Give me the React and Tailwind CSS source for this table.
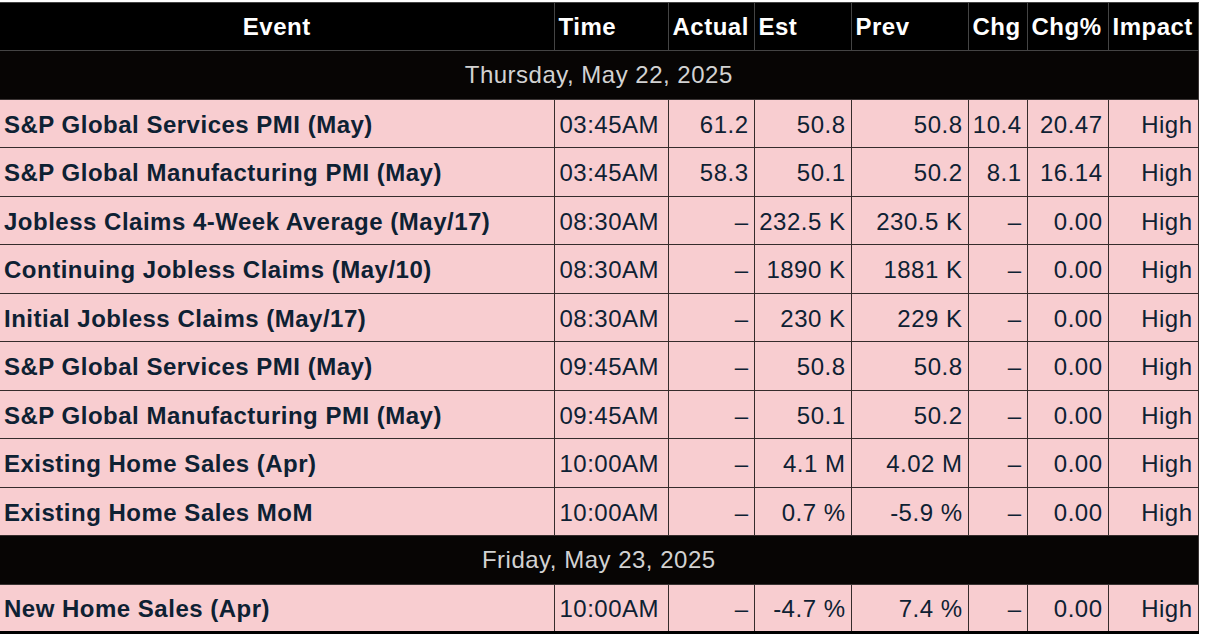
import React from "react";

const rowsThursday = [
  ["S&P Global Services PMI (May)", "03:45AM", "61.2", "50.8", "50.8", "10.4", "20.47", "High"],
  ["S&P Global Manufacturing PMI (May)", "03:45AM", "58.3", "50.1", "50.2", "8.1", "16.14", "High"],
  ["Jobless Claims 4-Week Average (May/17)", "08:30AM", "–", "232.5 K", "230.5 K", "–", "0.00", "High"],
  ["Continuing Jobless Claims (May/10)", "08:30AM", "–", "1890 K", "1881 K", "–", "0.00", "High"],
  ["Initial Jobless Claims (May/17)", "08:30AM", "–", "230 K", "229 K", "–", "0.00", "High"],
  ["S&P Global Services PMI (May)", "09:45AM", "–", "50.8", "50.8", "–", "0.00", "High"],
  ["S&P Global Manufacturing PMI (May)", "09:45AM", "–", "50.1", "50.2", "–", "0.00", "High"],
  ["Existing Home Sales (Apr)", "10:00AM", "–", "4.1 M", "4.02 M", "–", "0.00", "High"],
  ["Existing Home Sales MoM", "10:00AM", "–", "0.7 %", "-5.9 %", "–", "0.00", "High"],
];

const rowsFriday = [
  ["New Home Sales (Apr)", "10:00AM", "–", "-4.7 %", "7.4 %", "–", "0.00", "High"],
];

function DateRow({ label }) {
  return (
    <tr className="h-[48.5px] bg-[#070504]">
      <td colSpan={8} className="border border-l-0 border-[#3a3434] text-center font-normal text-[#d2d2d2]">
        {label}
      </td>
    </tr>
  );
}

function EventRow({ row }) {
  const [name, time, ...nums] = row;
  return (
    <tr className="h-[48.5px] bg-[#f8cdd0] text-[#0e2133]">
      <td className="border border-l-0 border-[#362c2c] pl-[4px] pt-[3px] font-bold whitespace-nowrap">{name}</td>
      <td className="border border-[#362c2c] pl-[5px] pt-[3px] whitespace-nowrap">{time}</td>
      {nums.map((n, i) => (
        <td key={i} className="border border-[#362c2c] pr-[5px] pt-[3px] text-right whitespace-nowrap">
          {n}
        </td>
      ))}
    </tr>
  );
}

export default function App() {
  const heads = ["Time", "Actual", "Est", "Prev", "Chg", "Chg%", "Impact"];
  return (
    <div className="min-h-screen bg-white pt-[2px]">
      <table
        className="table-fixed border-collapse w-[1198px] text-[24px] leading-none tracking-[0.5px]"
        style={{ fontFamily: '"Liberation Sans", Arial, sans-serif' }}
      >
        <colgroup>
          <col className="w-[554px]" />
          <col className="w-[114px]" />
          <col className="w-[86px]" />
          <col className="w-[97px]" />
          <col className="w-[117px]" />
          <col className="w-[59px]" />
          <col className="w-[81px]" />
          <col className="w-[90px]" />
        </colgroup>
        <thead>
          <tr className="h-[48px] bg-black text-white font-bold">
            <th className="border border-l-0 border-[#444] text-center">Event</th>
            {heads.map((h) => (
              <th key={h} className="border border-[#444] pl-[4px] text-left whitespace-nowrap">
                {h}
              </th>
            ))}
          </tr>
        </thead>
        <tbody className="border-b-[3px] border-black">
          <DateRow label="Thursday, May 22, 2025" />
          {rowsThursday.map((r, i) => (
            <EventRow key={i} row={r} />
          ))}
          <DateRow label="Friday, May 23, 2025" />
          {rowsFriday.map((r, i) => (
            <EventRow key={i} row={r} />
          ))}
        </tbody>
      </table>
    </div>
  );
}
